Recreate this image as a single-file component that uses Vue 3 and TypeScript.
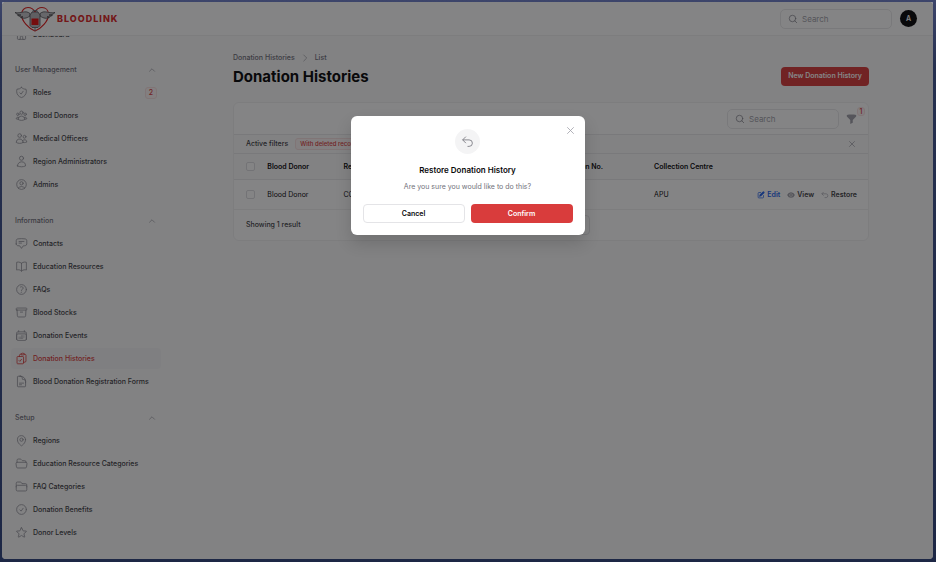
<script setup lang="ts">
import { ref } from 'vue'

interface NavItem {
  label: string
  icon: string[]
  badge?: string
  active?: boolean
}

interface NavGroup {
  title: string
  items: NavItem[]
}

const icons: Record<string, string[]> = {
  home: ['M2.25 12l8.95-8.95c.44-.44 1.15-.44 1.6 0L21.75 12M4.5 9.75v10.1c0 .63.5 1.15 1.13 1.15H9.75v-4.9c0-.6.5-1.1 1.12-1.1h2.25c.63 0 1.13.5 1.13 1.1V21h4.12c.63 0 1.13-.5 1.13-1.13V9.75M8.25 21h8.25'],
  shield: ['M9 12.75 11.25 15 15 9.75m-3-7.04A11.96 11.96 0 0 1 3.6 6 12 12 0 0 0 3 9.75c0 5.6 3.82 10.29 9 11.62 5.18-1.33 9-6.03 9-11.62 0-1.31-.21-2.57-.6-3.75h-.15c-3.2 0-6.1-1.25-8.25-3.29Z'],
  group: ['M18 18.72a9.09 9.09 0 0 0 3.74-.48 3 3 0 0 0-4.68-2.72m.94 3.2v.03c0 .23-.01.45-.04.67A11.94 11.94 0 0 1 12 21c-2.17 0-4.2-.58-5.96-1.58a6 6 0 0 1-.04-.7m12 0a5.97 5.97 0 0 0-.94-3.2m0 0a6 6 0 0 0-10.12 0m0 0a3 3 0 0 0-4.68 2.72 8.99 8.99 0 0 0 3.74.48m.94-3.2a5.97 5.97 0 0 0-.94 3.2M15 6.75a3 3 0 1 1-6 0 3 3 0 0 1 6 0Zm6 3a2.25 2.25 0 1 1-4.5 0 2.25 2.25 0 0 1 4.5 0Zm-13.5 0a2.25 2.25 0 1 1-4.5 0 2.25 2.25 0 0 1 4.5 0Z'],
  users: ['M15 19.13a9.38 9.38 0 0 0 2.63.37 9.34 9.34 0 0 0 4.12-.95 4.13 4.13 0 0 0-7.53-2.5M15 19.13v-.01c0-1.11-.29-2.16-.79-3.07M15 19.13v.1A12.32 12.32 0 0 1 8.62 21c-2.33 0-4.51-.65-6.37-1.77v-.1a6.38 6.38 0 0 1 11.96-3.08M12 6.38a3.38 3.38 0 1 1-6.75 0 3.38 3.38 0 0 1 6.75 0Zm8.25 2.25a2.63 2.63 0 1 1-5.25 0 2.63 2.63 0 0 1 5.25 0Z'],
  user: ['M15.75 6a3.75 3.75 0 1 1-7.5 0 3.75 3.75 0 0 1 7.5 0ZM4.5 20.12a7.5 7.5 0 0 1 15 0A17.93 17.93 0 0 1 12 21.75c-2.68 0-5.22-.58-7.5-1.63Z'],
  userCircle: ['M17.98 18.73A7.49 7.49 0 0 0 12 15.75a7.49 7.49 0 0 0-5.98 2.98m11.96 0a9 9 0 1 0-11.96 0m11.96 0A8.97 8.97 0 0 1 12 21a8.97 8.97 0 0 1-5.98-2.28M15 9.75a3 3 0 1 1-6 0 3 3 0 0 1 6 0Z'],
  chat: ['M7.5 8.25h9m-9 3H12m-9.75 1.51c0 1.6 1.12 2.99 2.71 3.23 1.13.16 2.27.29 3.42.38.35.03.67.21.87.5L12 21l2.76-4.13c.19-.29.51-.47.86-.5a48.3 48.3 0 0 0 3.42-.38c1.59-.24 2.71-1.63 2.71-3.23V6.74c0-1.6-1.12-3-2.71-3.23a48.4 48.4 0 0 0-14.08 0C3.37 3.75 2.25 5.14 2.25 6.74v6.02Z'],
  book: ['M12 6.04A8.97 8.97 0 0 0 6 3.75c-1.05 0-2.06.18-3 .51v14.25A9 9 0 0 1 6 18c2.3 0 4.41.87 6 2.29m0-14.25a8.97 8.97 0 0 1 6-2.29c1.05 0 2.06.18 3 .51v14.25A9 9 0 0 0 18 18a8.97 8.97 0 0 0-6 2.29m0-14.25v14.25'],
  question: ['M9.88 7.52c1.17-1.03 3.07-1.03 4.24 0 1.17 1.02 1.17 2.69 0 3.71-.2.18-.43.33-.67.45-.75.38-1.45 1-1.45 1.83v.74M21 12a9 9 0 1 1-18 0 9 9 0 0 1 18 0Zm-9 5.25h.01v.01H12v-.01Z'],
  archive: ['m20.25 7.5-.63 10.63a2.25 2.25 0 0 1-2.24 2.12H6.62a2.25 2.25 0 0 1-2.24-2.12L3.75 7.5M10 11.25h4M3.38 7.5h17.25c.62 0 1.12-.5 1.12-1.12v-1.5c0-.63-.5-1.13-1.12-1.13H3.38c-.63 0-1.13.5-1.13 1.13v1.5c0 .62.5 1.12 1.13 1.12Z'],
  calendar: ['M6.75 3v2.25M17.25 3v2.25M3 18.75V7.5a2.25 2.25 0 0 1 2.25-2.25h13.5A2.25 2.25 0 0 1 21 7.5v11.25m-18 0A2.25 2.25 0 0 0 5.25 21h13.5A2.25 2.25 0 0 0 21 18.75m-18 0v-7.5A2.25 2.25 0 0 1 5.25 9h13.5A2.25 2.25 0 0 1 21 11.25v7.5M12 12.75h.01M12 15h.01M12 17.25h.01M9.75 15h.01M9.75 17.25h.01M7.5 15h.01M7.5 17.25h.01M14.25 12.75h.01M14.25 15h.01M14.25 17.25h.01M16.5 12.75h.01M16.5 15h.01'],
  clipboard: ['M11.35 3.84a2.2 2.2 0 0 0-.1.66c0 .41.34.75.75.75h4.5c.41 0 .75-.34.75-.75 0-.23-.04-.45-.1-.66m-5.8 0A2.25 2.25 0 0 1 13.5 2.25H15c1.01 0 1.87.67 2.15 1.59m-5.8 0c-.38.02-.75.05-1.13.08C9.1 4.01 8.25 4.97 8.25 6.1v2.15M17.15 3.84c.38.02.75.05 1.13.08 1.12.1 1.97 1.05 1.97 2.18V16.5a2.25 2.25 0 0 1-2.25 2.25h-2.25M8.25 8.25H4.88c-.63 0-1.13.5-1.13 1.13v11.25c0 .62.5 1.12 1.13 1.12h9.75c.62 0 1.12-.5 1.12-1.12V18.75M8.25 8.25h6.38c.62 0 1.12.5 1.12 1.13v9.37m-8.25-3 1.5 1.5 3-3.75'],
  document: ['M19.5 14.25v-2.63a3.38 3.38 0 0 0-3.37-3.37h-1.5a1.13 1.13 0 0 1-1.13-1.13v-1.5a3.38 3.38 0 0 0-3.37-3.37H8.25m0 12.75h7.5m-7.5 3H12M10.5 2.25H5.63c-.63 0-1.13.5-1.13 1.13v17.25c0 .62.5 1.12 1.13 1.12h12.75c.62 0 1.12-.5 1.12-1.12V11.25a9 9 0 0 0-9-9Z'],
  pin: ['M15 10.5a3 3 0 1 1-6 0 3 3 0 0 1 6 0Z', 'M19.5 10.5c0 7.14-7.5 11.25-7.5 11.25S4.5 17.64 4.5 10.5a7.5 7.5 0 1 1 15 0Z'],
  folderOpen: ['M3.75 9.78c.11-.02.23-.03.34-.03h15.82c.11 0 .23.01.34.03m-16.5 0a2.25 2.25 0 0 0-1.88 2.54l.85 6a2.25 2.25 0 0 0 2.23 1.93h14.1a2.25 2.25 0 0 0 2.23-1.93l.85-6a2.25 2.25 0 0 0-1.88-2.54m-16.5 0V6A2.25 2.25 0 0 1 6 3.75h3.88c.4 0 .78.16 1.06.44l2.12 2.12c.28.28.66.44 1.06.44H18A2.25 2.25 0 0 1 20.25 9v.78'],
  folder: ['M2.25 12.75V12A2.25 2.25 0 0 1 4.5 9.75h15A2.25 2.25 0 0 1 21.75 12v.75m-8.69-6.44-2.12-2.12a1.5 1.5 0 0 0-1.06-.44H4.5A2.25 2.25 0 0 0 2.25 6v12a2.25 2.25 0 0 0 2.25 2.25h15A2.25 2.25 0 0 0 21.75 18V9a2.25 2.25 0 0 0-2.25-2.25h-5.38a1.5 1.5 0 0 1-1.06-.44Z'],
  check: ['M9 12.75 11.25 15 15 9.75M21 12a9 9 0 1 1-18 0 9 9 0 0 1 18 0Z'],
  star: ['M11.48 3.5a.56.56 0 0 1 1.04 0l2.13 5.11c.08.2.26.33.47.35l5.52.44c.5.04.7.66.32.99l-4.2 3.6a.56.56 0 0 0-.19.56l1.29 5.38a.56.56 0 0 1-.84.61l-4.73-2.88a.56.56 0 0 0-.58 0l-4.73 2.88a.56.56 0 0 1-.84-.61l1.29-5.38a.56.56 0 0 0-.19-.56l-4.2-3.6a.56.56 0 0 1 .32-.99l5.52-.44c.21-.02.39-.15.47-.35l2.13-5.11Z'],
}

const groups: NavGroup[] = [
  {
    title: 'User Management',
    items: [
      { label: 'Roles', icon: icons.shield, badge: '2' },
      { label: 'Blood Donors', icon: icons.group },
      { label: 'Medical Officers', icon: icons.users },
      { label: 'Region Administrators', icon: icons.user },
      { label: 'Admins', icon: icons.userCircle },
    ],
  },
  {
    title: 'Information',
    items: [
      { label: 'Contacts', icon: icons.chat },
      { label: 'Education Resources', icon: icons.book },
      { label: 'FAQs', icon: icons.question },
      { label: 'Blood Stocks', icon: icons.archive },
      { label: 'Donation Events', icon: icons.calendar },
      { label: 'Donation Histories', icon: icons.clipboard, active: true },
      { label: 'Blood Donation Registration Forms', icon: icons.document },
    ],
  },
  {
    title: 'Setup',
    items: [
      { label: 'Regions', icon: icons.pin },
      { label: 'Education Resource Categories', icon: icons.folderOpen },
      { label: 'FAQ Categories', icon: icons.folder },
      { label: 'Donation Benefits', icon: icons.check },
      { label: 'Donor Levels', icon: icons.star },
    ],
  },
]

const modalOpen = ref(true)
const globalSearch = ref('')
const tableSearch = ref('')
</script>

<template>
  <div class="desktop">
    <div class="window">
      <header class="topbar">
        <a class="brand" href="#">
          <svg class="brand-mark" viewBox="0 0 40 26" fill="none">
            <path d="M20 25C14 23 6.500 15 6.500 8.500 6.500 4 9.500 1.500 13 1.500c3 0 5.500 1.700 7 4.500 1.500-2.800 4-4.500 7-4.500 3.500 0 6.500 2.500 6.500 7C33.500 15 26 23 20 25Z" stroke="#e01e1e" stroke-width="1.200" />
            <path d="M15 7.500C10 3.500 6 8 0 6.500c2 2 4 2.500 6 2.500-1.500.3-2.500.3-3.500.2 2 1.600 4 1.800 5.500 1.600-1 .5-1.600.6-2.500.6 3 1.600 6 1 9.500-1.400ZM25 7.500c5-4 9 .5 15-1-2 2-4 2.500-6 2.500 1.500.3 2.500.3 3.500.2-2 1.600-4 1.800-5.500 1.600 1 .5 1.600.6 2.500.6-3 1.600-6 1-9.500-1.400Z" fill="#c4c4c8" stroke="#27272a" stroke-width=".6" />
            <path d="M17 6h6l2 3v10.500l-2 2h-6l-2-2V9Z" fill="#b4b4b8" stroke="#52525b" stroke-width=".8" />
            <path d="M16.500 12.500h7V19h-7Z" fill="#e01010" />
            <path d="M18 6V4.500h4V6M20 21.500V25" stroke="#71717a" stroke-width="1" />
          </svg>
          <span>BLOODLINK</span>
        </a>
        <div class="topbar-end">
          <label class="search">
            <svg class="i-md" viewBox="0 0 20 20"><path d="m17.500 17.500-4-4M15.500 9a6.500 6.500 0 1 1-13 0 6.500 6.500 0 0 1 13 0Z" /></svg>
            <input v-model="globalSearch" type="search" placeholder="Search" aria-label="Global search" />
          </label>
          <button class="avatar" type="button" aria-label="User menu">A</button>
        </div>
      </header>

      <div class="body">
        <nav class="sidebar">
          <a class="nav-item first" href="#">
            <svg class="nav-icon" viewBox="0 0 24 24"><path v-for="d in icons.home" :key="d" :d="d" /></svg>
            <span>Dashboard</span>
          </a>
          <section v-for="group in groups" :key="group.title" class="nav-group">
            <button class="group-title" type="button">
              <span>{{ group.title }}</span>
              <svg class="i-md" viewBox="0 0 20 20"><path d="m5 12.500 5-5 5 5" /></svg>
            </button>
            <a v-for="item in group.items" :key="item.label" class="nav-item" :class="{ active: item.active }" href="#">
              <svg class="nav-icon" viewBox="0 0 24 24"><path v-for="d in item.icon" :key="d" :d="d" /></svg>
              <span>{{ item.label }}</span>
              <span v-if="item.badge" class="badge nav-badge">{{ item.badge }}</span>
            </a>
          </section>
        </nav>

        <main class="main">
          <div class="content">
            <div class="page-head">
              <div>
                <div class="crumbs">
                  <a href="#">Donation Histories</a>
                  <svg class="i-md" viewBox="0 0 20 20"><path d="m7.500 4 6 6-6 6" /></svg>
                  <a href="#">List</a>
                </div>
                <h1>Donation Histories</h1>
              </div>
              <button class="primary" type="button">New Donation History</button>
            </div>

            <div class="card">
              <div class="tools">
                <label class="search">
                  <svg class="i-md" viewBox="0 0 20 20"><path d="m17.500 17.500-4-4M15.500 9a6.500 6.500 0 1 1-13 0 6.500 6.500 0 0 1 13 0Z" /></svg>
                  <input v-model="tableSearch" type="search" placeholder="Search" aria-label="Search table" />
                </label>
                <button class="filter" type="button" aria-label="Filter">
                  <svg viewBox="0 0 20 20"><path d="M1.500 2.500C4 2 7 1.700 10 1.700s6 .3 8.500.8v3L12.300 11.700V17l-4.600 2.300v-7.600L1.500 5.500Z" /></svg>
                  <span class="badge count">1</span>
                </button>
              </div>
              <div class="active-filters">
                <span class="af-label">Active filters</span>
                <span class="badge chip">With deleted records</span>
                <button class="clear" type="button" aria-label="Remove all filters">
                  <svg class="i-md" viewBox="0 0 20 20"><path d="m5 5 10 10M15 5 5 15" /></svg>
                </button>
              </div>
              <table>
                <colgroup>
                  <col class="c-check" /><col class="c-donor" /><col class="c-ref" /><col class="c-no" /><col class="c-centre" /><col />
                </colgroup>
                <thead>
                  <tr>
                    <th class="check"><input type="checkbox" aria-label="Select all" /></th>
                    <th>Blood Donor</th>
                    <th>Recipient</th>
                    <th>Donation No.</th>
                    <th>Collection Centre</th>
                    <th></th>
                  </tr>
                </thead>
                <tbody>
                  <tr>
                    <td class="check"><input type="checkbox" aria-label="Select row" /></td>
                    <td>Blood Donor</td>
                    <td>CO</td>
                    <td></td>
                    <td>APU</td>
                    <td>
                      <div class="actions">
                        <a class="edit" href="#">
                          <svg viewBox="0 0 20 20" fill="currentColor"><path d="m5.400 13.900 1-3.800a3 3 0 0 1 .7-1.200l7.200-7.200a2.500 2.500 0 0 1 3.700 3.700l-7.200 7.200a3 3 0 0 1-1.200.7l-3.700 1c-.3 0-.6-.1-.5-.4Z" /><path d="M10 3.800H4.800A2 2 0 0 0 2.800 5.800v9.500a2 2 0 0 0 2 2h9.500a2 2 0 0 0 2-2V10.500" fill="none" stroke="currentColor" stroke-width="1.800" /></svg>
                          Edit
                        </a>
                        <a href="#">
                          <svg viewBox="0 0 20 20" fill="#a1a1aa"><path fill-rule="evenodd" d="M.7 10.600a1.700 1.700 0 0 1 0-1.200 10 10 0 0 1 18.600 0c.2.400.2.800 0 1.200a10 10 0 0 1-18.600 0ZM14 10a4 4 0 1 0-8 0 4 4 0 0 0 8 0Z" /><circle cx="10" cy="10" r="2.500" /></svg>
                          View
                        </a>
                        <a href="#">
                          <svg viewBox="0 0 20 20" fill="none" stroke="#a1a1aa" stroke-width="1.600"><path d="M6.500 11.500 2 7l4.500-4.500M2 7h11a4.800 4.800 0 0 1 0 9.500H9" /></svg>
                          Restore
                        </a>
                      </div>
                    </td>
                  </tr>
                </tbody>
              </table>
              <div class="pager">
                <span>Showing 1 result</span>
                <select aria-label="Per page"><option>10</option></select>
              </div>
            </div>
          </div>
        </main>
      </div>

      <div v-if="modalOpen" class="overlay">
        <div class="modal" role="dialog" aria-modal="true" aria-labelledby="modal-title">
          <button class="modal-close" type="button" aria-label="Close" @click="modalOpen = false">
            <svg viewBox="0 0 24 24"><path d="M6 18 18 6M6 6l12 12" /></svg>
          </button>
          <div class="modal-icon">
            <svg viewBox="0 0 24 24"><path d="M9 15 3 9m0 0 6-6M3 9h12a6 6 0 0 1 0 12h-3" /></svg>
          </div>
          <h2 id="modal-title">Restore Donation History</h2>
          <p>Are you sure you would like to do this?</p>
          <div class="modal-actions">
            <button class="cancel" type="button" @click="modalOpen = false">Cancel</button>
            <button class="primary" type="button" @click="modalOpen = false">Confirm</button>
          </div>
        </div>
      </div>
    </div>
  </div>
</template>

<style>
body {
  margin: 0;
}
</style>

<style scoped>
.desktop {
  box-sizing: border-box;
  height: 100vh;
  padding: 2px 3px 3px 2px;
  background: linear-gradient(#3d456b, #26304f 12%, #1d2745);
  font-family: Inter, sans-serif;
  font-size: 7px;
  line-height: 10px;
  color: #09090b;
}
.desktop *,
.desktop *::before {
  box-sizing: border-box;
}
.window {
  position: relative;
  display: flex;
  flex-direction: column;
  height: 100%;
  overflow: hidden;
  border-radius: 2px 2px 4px 4px;
  background: #fafafa;
}
button,
input,
select {
  margin: 0;
  padding: 0;
  border: 0;
  background: none;
  font: inherit;
  color: inherit;
}
a {
  color: inherit;
  text-decoration: none;
}
svg {
  flex: none;
  display: block;
}
.i-md,
.nav-icon {
  width: 10px;
  height: 10px;
  fill: none;
  stroke: #a1a1aa;
  stroke-width: 1.5;
  stroke-linecap: round;
  stroke-linejoin: round;
}
.nav-icon {
  stroke: #94949d;
}
.search .i-md {
  stroke: #85858e;
}
.topbar {
  flex: none;
  z-index: 1;
  display: flex;
  align-items: center;
  justify-content: space-between;
  height: 34px;
  padding: 0 16px 0 13px;
  border-bottom: 1px solid #f0f0f1;
  background: #fff;
}
.brand {
  display: flex;
  align-items: center;
  gap: 2px;
  font-size: 9px;
  font-weight: 800;
  letter-spacing: 1px;
  color: #dc2626;
}
.brand-mark {
  width: 40px;
  height: 26px;
}
.topbar-end {
  display: flex;
  align-items: center;
  gap: 8px;
}
.search {
  display: flex;
  align-items: center;
  gap: 4px;
  width: 112px;
  height: 20px;
  padding: 0 7px;
  border: 1px solid #e8e8ea;
  border-radius: 5px;
  background: #fff;
}
.search input {
  flex: 1;
  min-width: 0;
  outline: 0;
  appearance: none;
  font-size: 8px;
}
.search input::placeholder {
  color: #a1a1aa;
}
.avatar {
  width: 17px;
  height: 17px;
  border-radius: 50%;
  background: #09090b;
  color: #fff;
  font-weight: 600;
}
.body {
  flex: 1;
  display: flex;
  min-height: 0;
}
.sidebar {
  flex: none;
  display: flex;
  flex-direction: column;
  gap: 15px;
  width: 167px;
  padding: 0 8px 0 9px;
  overflow: hidden;
}
.nav-group {
  display: flex;
  flex-direction: column;
  gap: 2px;
}
.group-title,
.nav-item {
  flex: none;
  display: flex;
  align-items: center;
  height: 21px;
  padding: 0 4px;
  border-radius: 4px;
  font-weight: 500;
}
.group-title {
  justify-content: space-between;
  color: #71717a;
}
.nav-item {
  gap: 5px;
  color: #3f3f46;
}
.nav-item.first {
  margin: -12px 0 -1px;
}
.nav-icon {
  width: 13px;
  height: 13px;
}
.nav-item.active {
  background: #f5f5f6;
  color: #d93c3c;
}
.active .nav-icon {
  stroke: #d93c3c;
}
.badge {
  border: 1px solid #f7e0e0;
  border-radius: 3px;
  background: #fdf4f4;
  color: #d93c3c;
  font-weight: 500;
}
.nav-badge {
  width: 12px;
  height: 12px;
  margin-left: auto;
  text-align: center;
}
.main {
  flex: 1;
  min-width: 0;
  padding: 16px 17px;
}
.content {
  max-width: 636px;
  margin: 0 auto;
}
.page-head {
  display: flex;
  align-items: center;
  justify-content: space-between;
  padding-bottom: 16px;
}
.page-head .primary {
  margin-top: 14px;
}
.crumbs {
  display: flex;
  align-items: center;
  gap: 5px;
  height: 12px;
  font-weight: 500;
  color: #71717a;
}
h1 {
  margin: 0;
  padding-top: 4px;
  font-size: 15px;
  line-height: 18px;
  font-weight: 700;
}
.primary {
  height: 19px;
  padding: 0 7px;
  border-radius: 4px;
  background: #d93c3c;
  color: #fff;
  font-weight: 600;
}
.card {
  overflow: hidden;
  border: 1px solid #f0f0f1;
  border-radius: 6px;
  background: #fff;
}
.tools {
  display: flex;
  align-items: center;
  justify-content: flex-end;
  gap: 7px;
  height: 31px;
  padding-right: 11px;
}
.filter {
  position: relative;
  width: 11px;
  height: 12px;
}
.filter svg {
  width: 11px;
  height: 12px;
  fill: #a1a1aa;
}
.count {
  position: absolute;
  top: -6px;
  left: 11px;
  width: 8px;
  height: 9px;
  line-height: 7px;
}
.active-filters {
  display: flex;
  align-items: center;
  gap: 7px;
  height: 19px;
  padding: 0 11px 0 12px;
  border-top: 1px solid #e8e8ea;
  background: #fafafa;
}
.af-label {
  font-weight: 500;
  color: #3f3f46;
}
.chip {
  padding: 0 4px;
  font-size: 6px;
}
.clear {
  margin-left: auto;
}
table {
  width: 100%;
  border-spacing: 0;
  table-layout: fixed;
}
.c-check {
  width: 4%;
}
.c-donor {
  width: 12%;
}
.c-ref {
  width: 34%;
}
.c-no {
  width: 15%;
}
.c-centre {
  width: 16%;
}
th,
td {
  padding: 0 8px;
  border-top: 1px solid #e8e8ea;
  text-align: left;
  white-space: nowrap;
}
th {
  height: 26px;
  background: #fafafa;
  font-weight: 600;
}
td {
  height: 30px;
}
.check {
  padding: 0 0 0 12px;
}
.check input {
  display: block;
  width: 9px;
  height: 9px;
  border: 1px solid #dcdce0;
  border-radius: 2px;
  background: #fff;
  appearance: none;
}
.actions {
  display: flex;
  justify-content: flex-end;
  gap: 7px;
  padding-right: 3px;
  font-weight: 600;
  color: #3f3f46;
}
.actions a {
  display: flex;
  align-items: center;
  gap: 2px;
}
.actions svg {
  width: 8px;
  height: 8px;
}
.actions .edit {
  color: #2563eb;
}
.pager {
  display: grid;
  grid-template-columns: 1fr auto 1fr;
  align-items: center;
  height: 31px;
  padding: 0 12px;
  border-top: 1px solid #f0f0f1;
  font-weight: 500;
  color: #3f3f46;
}
.pager select {
  width: 78px;
  height: 20px;
  padding: 0 6px;
  border: 1px solid #e4e4e7;
  border-radius: 4px;
  appearance: none;
}
.overlay {
  position: absolute;
  inset: 0;
  z-index: 2;
  display: grid;
  grid-template-rows: 1fr auto 3fr;
  justify-items: center;
  padding-top: 6px;
  background: rgba(9, 9, 11, 0.5);
}
.modal {
  position: relative;
  grid-row: 2;
  width: 234px;
  padding: 13px 12px 12px;
  border-radius: 6px;
  background: #fff;
  box-shadow: 0 8px 16px rgba(0, 0, 0, 0.15);
  text-align: center;
}
.modal-close {
  position: absolute;
  top: 8px;
  right: 8px;
}
.modal-close svg {
  width: 13px;
  height: 13px;
  fill: none;
  stroke: #a1a1aa;
  stroke-width: 1.5;
}
.modal-icon {
  display: grid;
  place-items: center;
  width: 25px;
  height: 25px;
  margin: 0 auto;
  border-radius: 50%;
  background: #f4f4f5;
}
.modal-icon svg {
  width: 13px;
  height: 13px;
  fill: none;
  stroke: #71717a;
  stroke-width: 1.5;
}
h2 {
  margin: 10px 0 0;
  font-size: 8px;
  line-height: 13px;
  font-weight: 600;
}
p {
  margin: 4px 0 0;
  line-height: 12px;
  color: #71717a;
}
.modal-actions {
  display: grid;
  grid-template-columns: 1fr 1fr;
  gap: 6px;
  padding-top: 11px;
}
.cancel {
  height: 19px;
  border: 1px solid #e4e4e7;
  border-radius: 4px;
  font-weight: 600;
}
</style>
